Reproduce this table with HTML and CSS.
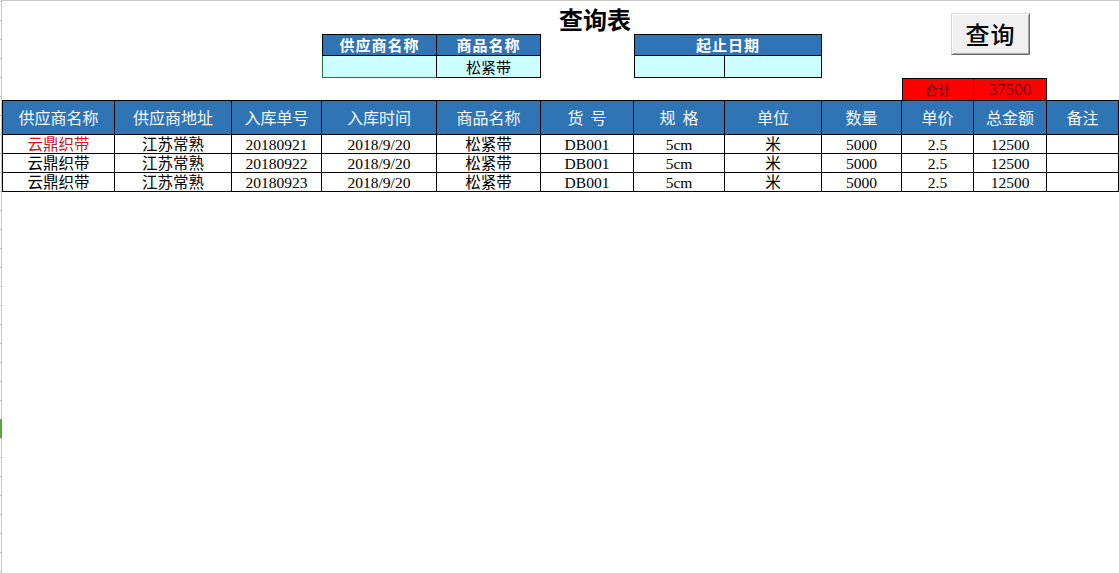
FILE: index.html
```html
<!DOCTYPE html>
<html lang="zh-CN">
<head>
<meta charset="utf-8">
<title>查询表</title>
<link rel="stylesheet" href="styles.css">
</head>
<body>
<div class="sheet">
  <div class="gutter"></div>
  <div class="main">
    <div class="colbar"></div>
    <div class="top grid">
      <div class="title">查询表</div>
      <div class="box bl bt th c4">供应商名称</div>
      <div class="box bt th c5">商品名称</div>
      <div class="box bl bt th c7s">起止日期</div>
      <div class="box bl inp c4 r3 sel"></div>
      <div class="box inp c5 r3">松紧带</div>
      <div class="box bl inp c7 r3"></div>
      <div class="box inp c8 r3"></div>
      <div class="tot bl c10">合计</div>
      <div class="tot c11 num-tot">37500</div>
    </div>
    <div class="table grid">
      <div class="h first">供应商名称</div>
      <div class="h">供应商地址</div>
      <div class="h">入库单号</div>
      <div class="h">入库时间</div>
      <div class="h">商品名称</div>
      <div class="h">货&nbsp;&nbsp;号</div>
      <div class="h">规&nbsp;&nbsp;格</div>
      <div class="h">单位</div>
      <div class="h">数量</div>
      <div class="h">单价</div>
      <div class="h">总金额</div>
      <div class="h">备注</div>

      <div class="d first red">云鼎织带</div>
      <div class="d">江苏常熟</div>
      <div class="d">20180921</div>
      <div class="d">2018/9/20</div>
      <div class="d">松紧带</div>
      <div class="d">DB001</div>
      <div class="d">5cm</div>
      <div class="d">米</div>
      <div class="d">5000</div>
      <div class="d">2.5</div>
      <div class="d">12500</div>
      <div class="d"></div>

      <div class="d first">云鼎织带</div>
      <div class="d">江苏常熟</div>
      <div class="d">20180922</div>
      <div class="d">2018/9/20</div>
      <div class="d">松紧带</div>
      <div class="d">DB001</div>
      <div class="d">5cm</div>
      <div class="d">米</div>
      <div class="d">5000</div>
      <div class="d">2.5</div>
      <div class="d">12500</div>
      <div class="d"></div>

      <div class="d first">云鼎织带</div>
      <div class="d">江苏常熟</div>
      <div class="d">20180923</div>
      <div class="d">2018/9/20</div>
      <div class="d">松紧带</div>
      <div class="d">DB001</div>
      <div class="d">5cm</div>
      <div class="d">米</div>
      <div class="d">5000</div>
      <div class="d">2.5</div>
      <div class="d">12500</div>
      <div class="d"></div>
    </div>
  </div>
  <button class="query-btn" type="button">查询</button>
</div>
</body>
</html>
```
FILE: styles.css
```css
html, body {
  margin: 0;
  padding: 0;
  background: #fff;
  overflow: hidden;
}
.sheet {
  position: relative;
  display: flex;
  width: 1119px;
  height: 573px;
  font-family: "Noto Sans CJK SC", sans-serif;
  color: #000;
}
.gutter {
  width: 2px;
  flex: none;
  background:
    linear-gradient(to bottom, transparent 419px, #5ea540 419px, #5ea540 438px, transparent 438px),
    repeating-linear-gradient(to bottom, transparent 0, transparent 1px, #c4c4c4 1px, #c4c4c4 2px, transparent 2px, transparent 19px),
    linear-gradient(to right, transparent 1px, #c8c8c8 1px);
}
.main {
  flex: 1;
  display: flex;
  flex-direction: column;
}
.colbar {
  height: 2px;
  background: linear-gradient(to bottom, #c8c8c8 0, #c8c8c8 1px, transparent 1px);
}
.grid {
  display: grid;
  grid-template-columns: 113px 117px 90px 115px 104px 93px 91px 97px 80px 72px 73px 72px;
}
.top {
  grid-template-rows: 32px 22px 22px 22px;
}
.title {
  grid-column: 5 / span 3;
  grid-row: 1;
  justify-self: start;
  margin-left: 122px;
  font-size: 24px;
  font-weight: 700;
  line-height: 34px;
}
.box {
  box-sizing: border-box;
  border-right: 1px solid #000;
  border-bottom: 1px solid #000;
  text-align: center;
}
.bl { border-left: 1px solid #000; }
.bt { border-top: 1px solid #000; }
.th {
  grid-row: 2;
  background: #2f75b5;
  color: #fff;
  font-size: 15px;
  font-weight: 700;
  line-height: 20px;
  letter-spacing: 1px;
}
.inp {
  background: #ccffff;
  font-size: 15px;
  line-height: 21px;
}
.sel {
  border-left-color: #217346;
  border-bottom-color: #217346;
}
.c4 { grid-column: 4; }
.c5 { grid-column: 5; }
.c7 { grid-column: 7; }
.c8 { grid-column: 8; }
.c7s { grid-column: 7 / span 2; }
.c10 { grid-column: 10; }
.c11 { grid-column: 11; }
.r3 { grid-row: 3; }
.tot {
  grid-row: 4;
  box-sizing: border-box;
  background: #ff0000;
  border-top: 1px solid #000;
  border-right: 1px solid #000;
  text-align: center;
  font-size: 13px;
  line-height: 21px;
  color: #300;
}
.num-tot {
  font-family: "Liberation Serif", "Noto Sans CJK SC", serif;
  font-size: 17px;
  color: #700;
}
.table {
  grid-template-rows: 35px 19px 19px 19px;
}
.h {
  box-sizing: border-box;
  background: #2f75b5;
  color: #f4f8ff;
  border-top: 1px solid #000;
  border-right: 1px solid #000;
  border-bottom: 1px solid #000;
  text-align: center;
  font-size: 16px;
  line-height: 33px;
}
.h.first { border-left: 1px solid #000; }
.d {
  box-sizing: border-box;
  border-right: 1px solid #000;
  border-bottom: 1px solid #000;
  text-align: center;
  font-family: "Liberation Serif", "Noto Sans CJK SC", serif;
  font-size: 15.5px;
  line-height: 19px;
  white-space: nowrap;
  overflow: hidden;
}
.d.first { border-left: 1px solid #000; }
.red { color: #c8191e; }
.query-btn {
  position: absolute;
  left: 951px;
  top: 13px;
  width: 79px;
  height: 42px;
  margin: 0;
  padding: 0;
  box-sizing: border-box;
  background: #f0f0f0;
  border: 1px solid;
  border-color: #d8d8d8 #6e6e6e #6e6e6e #d8d8d8;
  box-shadow: inset 1px 1px 0 #fff, inset -1px -1px 0 #a8a8a8;
  font-family: "Noto Sans CJK SC", sans-serif;
  font-size: 24px;
  font-weight: 500;
  line-height: 38px;
  color: #000;
  letter-spacing: 1px;
}
```
